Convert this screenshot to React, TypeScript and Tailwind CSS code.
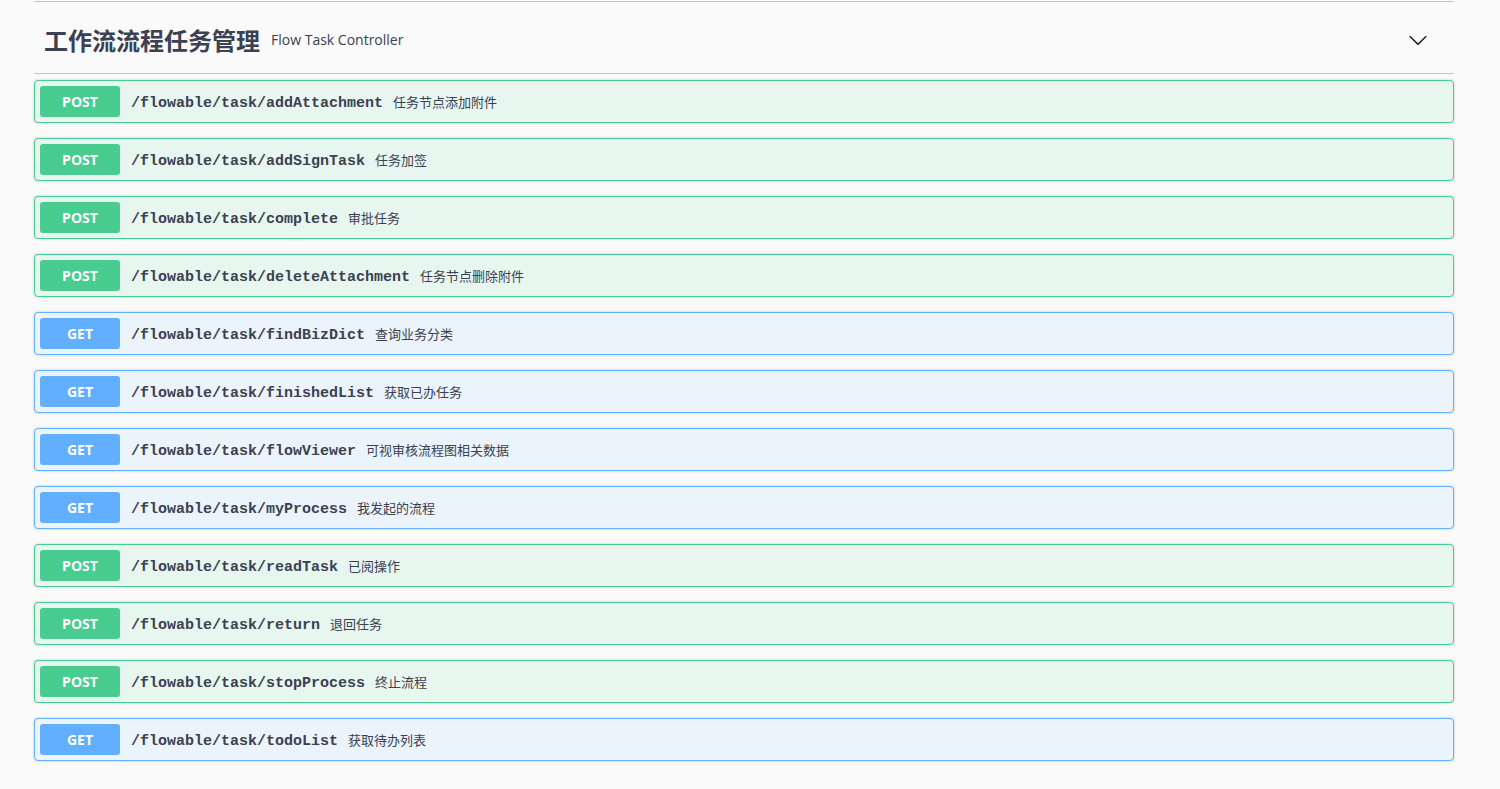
import React from "react";

type Op = { method: "POST" | "GET"; path: string; desc: string };

const ops: Op[] = [
  { method: "POST", path: "/flowable/task/addAttachment", desc: "任务节点添加附件" },
  { method: "POST", path: "/flowable/task/addSignTask", desc: "任务加签" },
  { method: "POST", path: "/flowable/task/complete", desc: "审批任务" },
  { method: "POST", path: "/flowable/task/deleteAttachment", desc: "任务节点删除附件" },
  { method: "GET", path: "/flowable/task/findBizDict", desc: "查询业务分类" },
  { method: "GET", path: "/flowable/task/finishedList", desc: "获取已办任务" },
  { method: "GET", path: "/flowable/task/flowViewer", desc: "可视审核流程图相关数据" },
  { method: "GET", path: "/flowable/task/myProcess", desc: "我发起的流程" },
  { method: "POST", path: "/flowable/task/readTask", desc: "已阅操作" },
  { method: "POST", path: "/flowable/task/return", desc: "退回任务" },
  { method: "POST", path: "/flowable/task/stopProcess", desc: "终止流程" },
  { method: "GET", path: "/flowable/task/todoList", desc: "获取待办列表" },
];

function OpBlock({ op }: { op: Op }) {
  const post = op.method === "POST";
  return (
    <div
      className={
        post
          ? "mb-[15px] rounded-[4px] border border-[#49cc90] bg-[#e8f6f0] shadow-[0_0_3px_rgba(0,0,0,0.19)]"
          : "mb-[15px] rounded-[4px] border border-[#61affe] bg-[#ebf3fb] shadow-[0_0_3px_rgba(0,0,0,0.19)]"
      }
    >
      <div className="flex items-center p-[5px]">
        <div
          className={
            (post ? "bg-[#49cc90] " : "bg-[#61affe] ") +
            "flex h-[31px] w-[80px] items-center justify-center rounded-[3px] text-[14px] font-bold text-white font-['Open_Sans','Noto_Sans',sans-serif]"
          }
        >
          {op.method}
        </div>
        <span className="pl-[11px] pr-[10px] pt-[4px] text-[15px] leading-[20px] font-bold text-[#3b4151] font-['Liberation_Mono','Courier_New',monospace]">
          {op.path}
        </span>
        <span className="text-[13px] leading-[20px] text-[#3b4151] font-['Noto_Sans_CJK_SC',sans-serif]">{op.desc}</span>
      </div>
    </div>
  );
}

export default function App() {
  return (
    <div className="min-h-screen w-full bg-[#fafafa] pt-[1px]">
      <div className="ml-[34px] w-[1420px]">
        <div className="flex h-[73px] items-center border-y border-[#c4c5c9] pl-[10px] pr-[26px] pt-[4px]">
          <span className="text-[24px] font-bold text-[#3b4151] font-['Noto_Sans_CJK_SC',sans-serif] leading-none">
            工作流流程任务管理
          </span>
          <span className="ml-[11px] text-[14px] text-[#3b4151] font-['Open_Sans','Noto_Sans',sans-serif]">
            Flow Task Controller
          </span>
          <div className="flex-1" />
          <svg width="20" height="20" viewBox="0 0 20 20" className="fill-[#1f2226]">
            <path d="M17.418 6.109c.272-.268.709-.268.979 0s.271.701 0 .969l-7.908 7.83c-.27.268-.707.268-.979 0l-7.908-7.83c-.27-.268-.27-.701 0-.969.271-.268.709-.268.979 0L10 13.25l7.418-7.141z" />
          </svg>
        </div>
        <div className="pt-[6px]">
          {ops.map((op) => (
            <OpBlock key={op.path} op={op} />
          ))}
        </div>
      </div>
    </div>
  );
}
